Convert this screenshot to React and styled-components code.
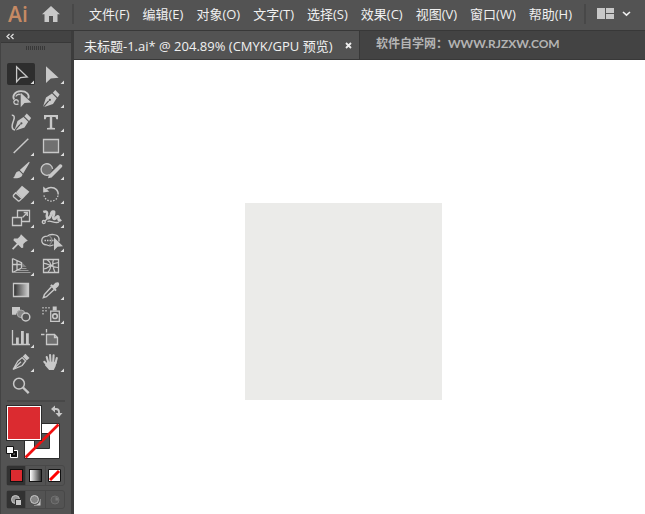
import React, { useState } from 'react'
import styled, { createGlobalStyle } from 'styled-components'

const GlobalStyle = createGlobalStyle`
  * {
    box-sizing: border-box;
  }
  body {
    margin: 0;
    background: #fff;
    font-family: "Open Sans", "Noto Sans CJK SC", sans-serif;
    font-size: 13px;
    color: #f0f0f0;
  }
  button {
    border: 0;
    padding: 0;
    background: none;
    color: inherit;
    font: inherit;
    white-space: nowrap;
  }
  svg {
    display: block;
  }
`

const Window = styled.div`
  display: flex;
  flex-direction: column;
  min-height: 100vh;
`

const MenuBar = styled.header`
  display: flex;
  align-items: center;
  height: 31px;
  padding: 0 13px 2px 8px;
  background: #535353;
  border-bottom: 1px solid #383838;
`

const Logo = styled.span`
  width: 35px;
  color: #c68a64;
  font-family: "Open Sans", sans-serif;
  font-size: 21px;
  font-weight: 600;
  line-height: 28px;
`

const Separator = styled.span`
  width: 2px;
  height: 20px;
  background: #484848;
`

const HomeButton = styled.button`
  margin-right: 12px;
`

const Menus = styled.nav`
  display: flex;
  gap: 13px;
  margin: 0 12px 0 15px;
`

const MenuButton = styled.button`
  line-height: 20px;
`

const LayoutButton = styled.button`
  margin-left: 11px;
`

const Workspace = styled.div`
  display: flex;
  flex: 1;
`

const Panel = styled.aside`
  display: flex;
  flex-direction: column;
  width: 74px;
  flex-shrink: 0;
  background: #535353;
  border-left: 1px solid #434343;
  border-right: 3px solid #3c3c3c;
`

const PanelHeader = styled.button`
  height: 12px;
  padding-left: 5px;
  background: #434343;
  border-bottom: 1px solid #383838;
`

const Grip = styled.div`
  width: 20px;
  height: 4px;
  margin: 3px 0 12px 25px;
  background: repeating-linear-gradient(90deg, #383838 0 1px, #535353 1px 2px);
`

const Tools = styled.div`
  display: grid;
  grid-template-columns: 28px 28px;
  grid-auto-rows: 24px;
  column-gap: 2px;
  padding-left: 6px;
`

const ToolButton = styled.button`
  height: 22px;
  margin: 1px 0;
  border-radius: 2px;
  background: ${props => (props.$active ? '#2e2e2e' : 'transparent')};
  svg {
    margin: -1px 0;
  }
`

const Rule = styled.div`
  height: 2px;
  margin: 2px 6px 3px;
  background: #484848;
`

const Paint = styled.div`
  position: relative;
  width: 56px;
  height: 54px;
  margin: 0 0 6px 5px;
`

const FillSwatch = styled.button`
  position: absolute;
  left: 0;
  top: 0;
  width: 36px;
  height: 36px;
  border: 1px solid #2c2c2c;
  background: #db2b30;
  box-shadow: inset 0 0 0 1px #fff;
`

const StrokeSwatch = styled.button`
  position: absolute;
  left: 18px;
  top: 18px;
`

const SwapButton = styled.button`
  position: absolute;
  left: 44px;
  top: 0;
`

const DefaultButton = styled.button`
  position: absolute;
  left: 0;
  top: 41px;
`

const Modes = styled.div`
  display: flex;
  width: 59px;
  height: ${props => props.$height}px;
  margin: 0 0 4px 5px;
  border: 1px solid #484848;
  border-radius: 3px;
`

const ModeButton = styled.button`
  display: flex;
  flex: 1;
  align-items: center;
  justify-content: center;
  background: ${props => (props.$active ? '#323232' : 'transparent')};
  & + & {
    border-left: 1px solid #484848;
  }
`

const Chip = styled.span`
  width: 13px;
  height: 13px;
  border: 1px solid #111;
  background: ${props => props.$fill};
`

const Documents = styled.main`
  display: flex;
  flex: 1;
  flex-direction: column;
  min-width: 0;
`

const TabBar = styled.div`
  display: flex;
  height: 29px;
  background: #434343;
  border-bottom: 1px solid #383838;
`

const Tab = styled.div`
  display: flex;
  align-items: center;
  justify-content: space-between;
  width: 286px;
  padding: 0 7px 0 10px;
  background: #535353;
  border-right: 1px solid #383838;
  white-space: nowrap;
`

const Watermark = styled.span`
  padding-left: 16px;
  color: #b4b4b4;
  font-family: Lato, "Noto Sans CJK SC", sans-serif;
  font-size: 12px;
  font-weight: 700;
  line-height: 26px;
  white-space: nowrap;
`

const Canvas = styled.div`
  position: relative;
  flex: 1;
  background: #fff;
`

const Shape = styled.div`
  position: absolute;
  left: 171px;
  top: 143px;
  width: 197px;
  height: 197px;
  background: #ebebe9;
`

const menus = [
  '文件(F)', '编辑(E)', '对象(O)', '文字(T)', '选择(S)',
  '效果(C)', '视图(V)', '窗口(W)', '帮助(H)',
]

const C = '#c8c8c8'
const line = { fill: 'none', stroke: C, strokeWidth: 1.3 }
const nib = (
  <g fill={C}>
    <path d="M6 20.7L9 11.5L15 7.6L19.7 12.3L16 18L7.2 20.9L11.8 15.6L11 14.8Z" />
    <path d="M15.8 6.7L18.3 4L22.6 8.4L20.6 11.4Z" />
    <path d="M6.8 20L12.7 14" stroke="#535353" strokeWidth=".8" />
    <circle cx="12.9" cy="13.8" r="1.1" fill="#535353" />
  </g>
)

// every icon sits on a 28 x 24 grid, one tool cell
const tools = [
  { name: 'Selection', more: true, icon: <path {...line} d="M9.6 4.8V19.8L13.4 15.6L20.2 15Z" /> },
  { name: 'Direct Selection', more: true, icon: <path fill={C} d="M9 4.2V21L13.8 16.5L21.6 15.8Z" /> },
  {
    name: 'Lasso',
    icon: (
      <g>
        <path {...line} strokeWidth="1.8" d="M7.2 13.5C5 10 7.5 5.5 13.5 5.2C19.5 5 23 8.5 21.2 12.5" />
        <path {...line} d="M11.5 17.8C7.5 19.5 5.8 16.5 7.5 14.5C9.5 12.8 12.2 14.5 10.8 16.5M8.7 10.5C10 8.3 12 8 13.5 8.6" />
        <path fill={C} d="M13.7 6.8V21.3L17.5 17.1L24.3 16.4Z" />
      </g>
    ),
  },
  { name: 'Pen', more: true, icon: nib },
  {
    name: 'Curvature',
    icon: (
      <g>
        <g transform="translate(1.5 -.5)">{nib}</g>
        <path {...line} strokeWidth="1.5" d="M4.8 5.3C7.5 5 7.8 7.5 6.6 10.5C5 14.5 3.8 19.5 8 20" />
      </g>
    ),
  },
  { name: 'Type', more: true, icon: <path fill={C} d="M7 5H21V9.3H19.3L18.5 7H15.2V17.7L18 18V19.5H10V18L12.8 17.7V7H9.5L8.7 9.3H7Z" /> },
  { name: 'Line Segment', more: true, icon: <path {...line} strokeWidth="1.5" d="M6.7 19L21.3 4.7" /> },
  { name: 'Rectangle', more: true, icon: <path {...line} fill="#707070" d="M6.5 5.5H21.5V18.5H6.5Z" /> },
  {
    name: 'Paintbrush',
    more: true,
    icon: <path fill={C} d="M22 3.8L22.7 4.6L16.2 15.5L12.8 12.1ZM12.2 13L15.5 16.2C15 20 10.5 20.6 6 20C8.5 18.6 7.7 13.5 12.2 13Z" />,
  },
  {
    name: 'Shaper',
    more: true,
    icon: (
      <g>
        <path {...line} fill="#707070" d="M12.5 16.7A5.8 5.8 0 1 1 15.6 10.8" />
        <path fill={C} d="M11 20.3L12 16.8L22.8 6.3Q24 5.8 25 7Q25.8 8.1 25 9L14.6 19.4Z" />
      </g>
    ),
  },
  {
    name: 'Eraser',
    more: true,
    icon: (
      <g>
        <path fill={C} d="M15 3.7L22.4 9.7L15.6 17.1L9 10.3Z" />
        <path {...line} d="M8.7 10.8L6.5 13.2Q6 14 6.5 14.7L11 18.8Q12 19.3 12.8 18.6L14.8 16.5Z" />
      </g>
    ),
  },
  {
    name: 'Rotate',
    more: true,
    icon: (
      <g>
        <path {...line} strokeWidth="1.5" d="M9.2 7.2C14 3.4 21.2 6.2 21.2 12.5" />
        <path {...line} strokeDasharray="1.5 1.5" d="M21 13.5C19.5 21.2 7.4 21.2 6.8 12" />
        <path fill={C} d="M6.2 4.5V10.5L12.3 9.5Z" />
      </g>
    ),
  },
  {
    name: 'Scale',
    more: true,
    icon: (
      <g {...line}>
        <path d="M10.5 11V4.5H22.5V15.5H15M5.5 11.5H14.5V19.5H5.5Z" />
        <path d="M15.5 11.5L20 7M16.7 6.5H20.3V10" />
      </g>
    ),
  },
  {
    name: 'Warp',
    more: true,
    icon: (
      <g>
        <path {...line} strokeWidth="2.6" d="M6.3 6C9.5 4.5 11 6.5 9.8 9.5C9.5 13.5 13 13 14 8.5C14.5 4.5 18 4.5 17 8C15.5 12 16.5 14 18.5 12.5C19.5 9.5 22 9.5 21.5 12C21 14.5 22.5 15 24 13.5" />
        <path {...line} d="M8 15L18 5M10.5 15.5C14 14 18 18 22 16" />
        <circle cx="6.8" cy="16" r="1.5" {...line} />
      </g>
    ),
  },
  {
    name: 'Puppet Warp',
    more: true,
    icon: <path fill={C} d="M14 4.2L20.8 10.8L18.7 11.7L16.3 14L16.2 17.7L14.5 18L11.2 14.8L6.2 19.7L5 18.5L9.8 13.5L6.4 10.2L7 8.4L10.7 8.5L13 6.2Z" />,
  },
  {
    name: 'Shape Builder',
    more: true,
    icon: (
      <g>
        <path {...line} d="M10.5 6.2C12.5 3.8 21 3.5 22 8.5V11.5M10.5 6.2C3 6.2 3 14.8 9.5 14.8C11.5 16 14.5 16 16.5 14.8" />
        <path {...line} d="M7.5 10.5H17.5" strokeDasharray="1.5 1" />
        <path {...line} stroke="#888" d="M12.5 6C15.5 8 15.5 12.5 12.5 15" />
        <path fill={C} d="M17 7.5V20.5L20.6 16.8L26 16.3Z" />
      </g>
    ),
  },
  {
    name: 'Perspective Grid',
    more: true,
    icon: (
      <g>
        <path {...line} d="M5.5 4.5V18.5M5.5 4.5L14.5 8.7V14L5.5 18.5M10 6.7V16.5M5.5 10.5H14.5" />
        <path fill="#858585" d="M15 8.5L19.5 13H15Z" />
        <path stroke="#999" d="M14 14.5H19.5M11 16.5H21.5M7 18.5H23.5" />
      </g>
    ),
  },
  {
    name: 'Mesh',
    icon: (
      <g {...line}>
        <path d="M6.5 5.5H21.5V18.5H6.5Z" />
        <path strokeWidth="1.2" d="M10 5.5C15 9 14.5 14 11 18.5M6.5 9.5C11 8.5 14 14 21.5 13.5M6.5 15C12 15 13.5 9 21.5 8.5M16.5 5.5C14.5 10 16.5 15 18 18.5" />
      </g>
    ),
  },
  { name: 'Gradient', icon: <path {...line} fill="url(#tool-gradient)" d="M6.5 5.5H21.5V18.5H6.5Z" /> },
  {
    name: 'Eyedropper',
    more: true,
    icon: (
      <g>
        <path {...line} strokeWidth="1.5" d="M14.5 8.8L7.4 16.6L6.4 19.6L9.4 18.7L17.2 11.5" />
        <path fill={C} d="M13.2 7.4L14.5 6.2L16 7.3L18.4 4.7Q21.8 3.5 22 5.3Q22.7 6.8 21.2 8.5L18.6 10.8L19.7 12.1L18.3 13.2Z" />
      </g>
    ),
  },
  {
    name: 'Blend',
    icon: (
      <g>
        <path fill={C} d="M5 5H13V8.5Q10 9 9.2 12.7H5Z" />
        <circle cx="14" cy="11.8" r="3.8" fill="#858585" stroke="#aaa" />
        <circle cx="18.8" cy="15" r="4" {...line} fill="#535353" strokeWidth="1.5" />
      </g>
    ),
  },
  {
    name: 'Symbol Sprayer',
    more: true,
    icon: (
      <g>
        <path stroke="#b0b0b0" strokeWidth="1.6" strokeDasharray="1.6 1.4" d="M5.2 5.8H13M5.2 8.8H10.5M5.2 11.8H7" />
        <path {...line} d="M13.7 9.2H22.3V19.4H13.7Z" />
        <path fill={C} d="M15.7 4.5H19.7V8.5H15.7Z" />
        <circle cx="18" cy="14.2" r="2.3" {...line} strokeWidth="1.6" />
      </g>
    ),
  },
  {
    name: 'Column Graph',
    more: true,
    icon: (
      <g>
        <path {...line} d="M5.5 4V18.5H23" />
        <path fill={C} d="M9 11.5H11.8V18H9ZM14 5H16.8V18H14ZM19 7.3H21.8V18H19Z" />
      </g>
    ),
  },
  {
    name: 'Artboard',
    icon: <path {...line} fill="#707070" d="M9.5 8.5H17.5L20.5 11.5V18.5H9.5ZM9.5 3V6.5M4 8.5H7.5M17.5 8.5V11.5H20.5" />,
  },
  {
    name: 'Slice',
    more: true,
    icon: (
      <g>
        <path {...line} d="M6 19.5L10.8 11.2L15.2 7.6L18.6 11L15.2 15.5L6 19.5L14 11.8" />
        <path fill={C} d="M15.8 6.5L18.3 3.8L22.5 7.9L19.6 10.6Z" />
      </g>
    ),
  },
  {
    name: 'Hand',
    more: true,
    icon: (
      <g>
        <path fill="none" stroke={C} strokeWidth="2.1" strokeLinecap="round" d="M9.7 7L11.4 13M13.1 5L13.5 12M16.6 5.3L16.2 12M19.8 8L18.4 13.5M7.3 11.8L11 16" />
        <path fill={C} d="M10.3 11.5L19.5 12L18.7 16L16.8 20H12.1L8 15.2Z" />
      </g>
    ),
  },
  {
    name: 'Zoom',
    icon: (
      <g>
        <circle cx="12" cy="9.7" r="5.4" {...line} strokeWidth="1.5" />
        <path stroke={C} strokeWidth="2.4" d="M16 13.5L21.7 19.2" />
      </g>
    ),
  },
]

const drawModes = [
  {
    name: 'Draw Normal',
    icon: (
      <g>
        <circle cx="5.5" cy="5.5" r="4" fill="#969696" stroke={C} />
        <path fill={C} stroke="#323232" d="M5.5 5.5H11.5V11.5H5.5Z" />
      </g>
    ),
  },
  {
    name: 'Draw Behind',
    icon: (
      <g>
        <path fill={C} d="M5 5H11.5V11.5H5Z" />
        <circle cx="5.5" cy="5.5" r="4" fill="#858585" stroke="#535353" strokeWidth="3" />
        <circle cx="5.5" cy="5.5" r="4" fill="#858585" stroke={C} />
      </g>
    ),
  },
  {
    name: 'Draw Inside',
    icon: (
      <g>
        <circle cx="6" cy="6" r="4" fill="#5c5c5c" stroke="#707070" />
        <path fill="#787878" d="M6.5 6.5V3A3.5 3.5 0 0 1 9.5 6.5Z" />
      </g>
    ),
  },
]

const None = () => (
  <svg width="13" height="13">
    <path fill="#fff" stroke="#111" d="M.5 .5H12.5V12.5H.5Z" />
    <path stroke="#f00" strokeWidth="3" d="M2 11L11 2" />
  </svg>
)

const Toolbox = () => {
  const [tool, setTool] = useState('Selection')
  const [mode, setMode] = useState('Draw Normal')

  return (
    <Panel>
      <PanelHeader aria-label="Collapse panel">
        <svg width="8" height="7">
          <path {...line} stroke="#ddd" d="M3.5 1L1 3.5L3.5 6M7.5 1L5 3.5L7.5 6" />
        </svg>
      </PanelHeader>
      <Grip />
      <Tools>
        {tools.map(item => (
          <ToolButton
            key={item.name}
            aria-label={item.name}
            $active={tool === item.name}
            onClick={() => setTool(item.name)}
          >
            <svg width="28" height="24">
              <defs>
                <linearGradient id="tool-gradient">
                  <stop offset="0" stopColor="#2c2c2c" />
                  <stop offset="1" stopColor="#d0d0d0" />
                </linearGradient>
              </defs>
              {item.icon}
              {item.more && <path fill="#ddd" d="M27 18.5V22H23.5Z" />}
            </svg>
          </ToolButton>
        ))}
      </Tools>
      <Rule />
      <Paint>
        <StrokeSwatch aria-label="Stroke">
          <svg width="36" height="36">
            <path fill="#fff" fillRule="evenodd" stroke="#2c2c2c" d="M.5 .5H35.5V35.5H.5ZM10.5 10.5V25.5H25.5V10.5Z" />
            <path stroke="#f01010" strokeWidth="2.6" d="M1.5 34.5L34.5 1.5" />
          </svg>
        </StrokeSwatch>
        <FillSwatch aria-label="Fill" />
        <SwapButton aria-label="Swap fill and stroke">
          <svg width="13" height="13">
            <path {...line} strokeWidth="1.8" d="M4 4H6Q9 4 9 7V9" />
            <path fill={C} d="M1 4L5 .5V7.5ZM5.5 8H12.5L9 12Z" />
          </svg>
        </SwapButton>
        <DefaultButton aria-label="Default fill and stroke">
          <svg width="12" height="12">
            <path fill="none" stroke="#fff" d="M4.5 4.5H11.5V11.5H4.5Z" />
            <path fill="none" stroke="#111" strokeWidth="2" d="M6 6H10V10H6Z" />
            <path fill="#fff" stroke="#111" d="M.5 .5H7.5V7.5H.5Z" />
          </svg>
        </DefaultButton>
      </Paint>
      <Modes $height={21}>
        <ModeButton aria-label="Color" $active><Chip $fill="#db2b30" /></ModeButton>
        <ModeButton aria-label="Gradient"><Chip $fill="linear-gradient(90deg, #fff, #333)" /></ModeButton>
        <ModeButton aria-label="None"><None /></ModeButton>
      </Modes>
      <Modes $height={19}>
        {drawModes.map(item => (
          <ModeButton
            key={item.name}
            aria-label={item.name}
            $active={mode === item.name}
            onClick={() => setMode(item.name)}
          >
            <svg width="12" height="12">{item.icon}</svg>
          </ModeButton>
        ))}
      </Modes>
    </Panel>
  )
}

const App = () => (
  <Window>
    <GlobalStyle />
    <MenuBar>
      <Logo>Ai</Logo>
      <HomeButton aria-label="Home">
        <svg width="18" height="16">
          <path fill={C} d="M9 0L18 8.3H15.5V16H11V10H7V16H2.5V8.3H0Z" />
        </svg>
      </HomeButton>
      <Separator />
      <Menus>
        {menus.map(name => <MenuButton key={name}>{name}</MenuButton>)}
      </Menus>
      <Separator />
      <LayoutButton aria-label="Arrange documents">
        <svg width="35" height="12">
          <path fill={C} d="M0 0H8V11H0ZM9 0H17V5H9ZM9 6H17V11H9Z" />
          <path {...line} stroke="#eee" strokeWidth="1.6" d="M26 4L29.5 7.2L33 4" />
        </svg>
      </LayoutButton>
    </MenuBar>
    <Workspace>
      <Toolbox />
      <Documents>
        <TabBar>
          <Tab>
            未标题-1.ai* @ 204.89% (CMYK/GPU 预览)
            <button aria-label="Close tab">
              <svg width="7" height="7">
                <path stroke="#eee" strokeWidth="1.8" d="M1 1L6 6M6 1L1 6" />
              </svg>
            </button>
          </Tab>
          <Watermark>软件自学网：WWW.RJZXW.COM</Watermark>
        </TabBar>
        <Canvas>
          <Shape />
        </Canvas>
      </Documents>
    </Workspace>
  </Window>
)

export default App
